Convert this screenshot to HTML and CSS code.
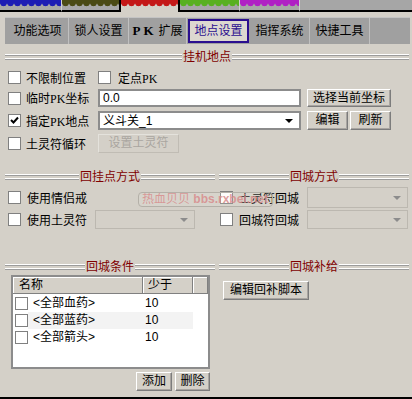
FILE: index.html
```html
<!DOCTYPE html>
<html>
<head>
    <title>地点设置</title>
    <link rel="stylesheet" href="styles.css">
</head>
<body>
    <!-- Colour tabs along the top edge -->
    <div class="strip">
        <div class="ft blue"></div>
        <div class="ft olive"></div>
        <div class="ft red"></div>
        <div class="ft green"></div>
        <div class="ft purple"></div>
        <div class="ft rest"></div>
    </div>

    <!-- Page tabs -->
    <div class="tabs">
        <div class="tab t1">功能选项</div>
        <div class="tab t2">锁人设置</div>
        <div class="tab t3"><span class="pk-bold">PK</span>扩展</div>
        <div class="tab sel">地点设置</div>
        <div class="tab t5">指挥系统</div>
        <div class="tab t6">快捷工具</div>
    </div>

    <div class="page">
        <!-- 挂机地点 -->
        <div class="sechead"><span class="line"></span><span class="title">挂机地点</span><span class="line"></span></div>
        <div class="s1">
            <div class="row r1">
                <div class="opt w90"><span class="cb"></span>不限制位置</div>
                <div class="opt wide"><span class="cb"></span><span>定点<span class="pk">PK</span></span></div>
            </div>
            <div class="row r2">
                <div class="opt w90"><span class="cb"></span><span>临时<span class="pk">PK</span>坐标</span></div>
                <div class="field">0.0</div>
                <div class="btn b-pick">选择当前坐标</div>
            </div>
            <div class="row r3">
                <div class="opt w90">
                    <span class="cb"><svg width="11" height="11" viewBox="0 0 11 11"><polyline points="2,5 4.5,7.5 9,2.5" fill="none" stroke="#000" stroke-width="2"/></svg></span>
                    <span>指定<span class="pk">PK</span>地点</span>
                </div>
                <div class="field combo"><span>义斗关_1</span><span class="arrow"></span></div>
                <div class="btn b-small">编辑</div>
                <div class="btn b-small">刷新</div>
            </div>
            <div class="row r4">
                <div class="opt w90"><span class="cb"></span>土灵符循环</div>
                <div class="btn dis b-set">设置土灵符</div>
            </div>
        </div>

        <!-- 回挂点方式 / 回城方式 -->
        <div class="cols sec2">
            <div class="col">
                <div class="sechead"><span class="line"></span><span class="title">回挂点方式</span><span class="line"></span></div>
                <div class="row ra left">
                    <div class="opt g6"><span class="cb"></span>使用情侣戒</div>
                </div>
                <div class="row rb left">
                    <div class="opt g6 w87"><span class="cb"></span>使用土灵符</div>
                    <div class="dcombo w100"><span class="arrow grey"></span></div>
                </div>
            </div>
            <div class="col">
                <div class="sechead"><span class="line"></span><span class="title">回城方式</span><span class="line"></span></div>
                <div class="row ra right">
                    <div class="opt g6 w87"><span class="cb"></span>土灵符回城</div>
                    <div class="dcombo w101 tall"><span class="arrow grey"></span></div>
                </div>
                <div class="row rb right">
                    <div class="opt g6 w87"><span class="cb"></span>回城符回城</div>
                    <div class="dcombo w101"><span class="arrow grey"></span></div>
                </div>
            </div>
        </div>

        <!-- 回城条件 / 回城补给 -->
        <div class="cols sec3">
            <div class="col">
                <div class="sechead"><span class="line"></span><span class="title">回城条件</span><span class="line"></span></div>
                <div class="list">
                    <div class="lhead">
                        <div class="hc c-name">名称</div>
                        <div class="hc c-num">少于</div>
                        <div class="hc c-end"></div>
                    </div>
                    <div class="lrow first"><span class="cb"></span><div class="cell">&lt;全部血药&gt;<span class="num">10</span></div></div>
                    <div class="lrow"><span class="cb"></span><div class="cell hl">&lt;全部蓝药&gt;<span class="num">10</span></div></div>
                    <div class="lrow"><span class="cb"></span><div class="cell">&lt;全部箭头&gt;<span class="num">10</span></div></div>
                </div>
                <div class="lbtns">
                    <div class="btn b-add">添加</div>
                    <div class="btn b-del">删除</div>
                </div>
            </div>
            <div class="col">
                <div class="sechead"><span class="line"></span><span class="title">回城补给</span><span class="line"></span></div>
                <div class="btn b-script">编辑回补脚本</div>
            </div>
        </div>
    </div>

    <div class="base"></div>

    <!-- Forum watermark lying over the form -->
    <div class="watermark">热血贝贝 <b>bbs.rxbei.net</b></div>
</body>
</html>
```

FILE: styles.css
```css
/* Whole window */
body {
    margin: 0;
    width: 412px;
    height: 399px;
    display: flex;
    flex-direction: column;
    overflow: hidden;
    background-color: #d4d0c8;
    font-family: "Liberation Sans", "Noto Sans CJK SC", sans-serif;
    font-size: 12px;
    color: #000;
    position: relative;
}

/* Colour tabs at the top */
.strip {
    display: flex;
    height: 12px;
    flex: none;
}

.ft {
    box-sizing: border-box;
    height: 12px;
    background-color: #a6a6a6;
    border-bottom: 2px solid #000;
    background-image:
        radial-gradient(circle at 3.5px 3px, var(--c) 3px, transparent 3.6px),
        linear-gradient(var(--c), var(--c));
    background-size: 7px 7px, 100% 3px;
    background-repeat: repeat-x, no-repeat;
}

.blue { --c: #1c1cb4; width: 62px; border-right: 1px solid #d0d0d0; }
.olive { --c: #4a4a14; width: 59px; border-right: 2px solid #000; }
.red { --c: #c41818; width: 57px; border-bottom: none; background-color: #d4d0c8; }
.green { --c: #58b020; width: 62px; border-left: 2px solid #000; border-right: 1px solid #d0d0d0; }
.purple { --c: #b020c4; width: 60px; border-right: 1px solid #d0d0d0; }
.rest { --c: transparent; flex: 1; }

/* Page tab bar */
.tabs {
    display: flex;
    flex: none;
    box-sizing: border-box;
    height: 27px;
    margin: 5px 2px 0 5px;
    padding-left: 2px;
    background-color: #a0a0a0;
    border-top: 1px solid #c4c4c4;
}

.tab {
    box-sizing: border-box;
    height: 26px;
    line-height: 26px;
    text-align: center;
    border-right: 1px solid #c0c0c0;
}

.t1 { width: 62px; }
.t2 { width: 60px; }
.t3 { width: 58px; }
.t5 { width: 60px; }
.t6 { width: 60px; }

.tab.sel {
    width: 61px;
    height: 24px;
    margin: 1px 1px 0 1px;
    line-height: 20px;
    border: 2px solid #2b0f8f;
    background-color: #dcd8d0;
    color: #2b0f8f;
}

.pk-bold {
    font-family: "Liberation Serif", serif;
    font-weight: bold;
    font-size: 13px;
    letter-spacing: 3px;
    margin-right: 2px;
}

.pk {
    font-family: "Liberation Serif", serif;
    font-size: 12px;
}

/* Main area */
.page {
    flex: 1;
    padding: 0 3px 0 5px;
}

.sechead {
    display: flex;
    align-items: center;
    height: 14px;
    margin-top: 6px;
}

.sechead .line {
    flex: 1;
    height: 6px;
    background: linear-gradient(to bottom,
        #fff 0 1px, #9c9c9c 1px 2px, transparent 2px 4px,
        #fff 4px 5px, #9c9c9c 5px 6px);
}

.sechead .title {
    color: #800000;
    padding: 0 1px;
    line-height: 14px;
}

.row {
    display: flex;
    align-items: center;
}

.s1 { padding-left: 3px; }
.r1 { margin-top: 6px; height: 15px; }
.r2 { margin-top: 4px; height: 18px; }
.r3 { margin-top: 4px; height: 19px; }
.r4 { margin-top: 4px; height: 19px; }

.opt {
    display: flex;
    align-items: center;
    gap: 5px;
    white-space: nowrap;
}

.opt.wide { gap: 7px; }
.opt.g6 { gap: 6px; }
.w90 { width: 90px; flex: none; }
.w87 { width: 87px; flex: none; }

/* Checkbox */
.cb {
    box-sizing: border-box;
    width: 13px;
    height: 13px;
    flex: none;
    border: 1px solid #808080;
    background-color: #fff;
    display: flex;
}

/* Edit box and combo */
.field {
    box-sizing: border-box;
    width: 203px;
    height: 18px;
    border: 2px solid #8c8c8c;
    background-color: #fff;
    padding-left: 3px;
    line-height: 14px;
    margin-right: 6px;
}

.field.combo {
    height: 19px;
    display: flex;
    align-items: center;
    justify-content: space-between;
}

.arrow {
    width: 0;
    height: 0;
    border-left: 4px solid transparent;
    border-right: 4px solid transparent;
    border-top: 4px solid #000;
    margin-right: 6px;
}

.arrow.grey { border-top-color: #8c8c8c; }

.dcombo {
    box-sizing: border-box;
    height: 19px;
    border: 1px solid #bcb8b0;
    display: flex;
    align-items: center;
    justify-content: flex-end;
}

.dcombo.tall { height: 21px; }
.w100 { width: 100px; }
.w101 { width: 101px; }

/* Buttons */
.btn {
    box-sizing: border-box;
    height: 19px;
    line-height: 16px;
    text-align: center;
    background-color: #d4d0c8;
    border: 1px solid;
    border-color: #fff #7c7c7c #7c7c7c #fff;
    box-shadow: inset -1px -1px #a8a4a0;
    white-space: nowrap;
}

.b-pick { width: 84px; height: 18px; }
.b-small { width: 41px; margin-right: 2px; }
.b-set { width: 81px; }

.btn.dis {
    color: #aaa6a0;
    border-color: #e4e2dc #c0bcb4 #c0bcb4 #e4e2dc;
    box-shadow: none;
}

/* Two column sections */
.cols {
    display: grid;
    grid-template-columns: 210px 190px;
    column-gap: 4px;
}

.sec2 { margin-top: 11px; }
.sec3 { margin-top: 25px; }

.ra { margin-top: 3px; height: 21px; }
.rb { margin-top: 2px; height: 19px; }
.left { padding-left: 3px; }
.right { padding-left: 1px; }

/* List of return conditions */
.list {
    box-sizing: border-box;
    width: 199px;
    height: 94px;
    margin: 1px 0 0 6px;
    border: 2px solid #8c8c8c;
    background-color: #fff;
}

.lhead {
    display: flex;
    height: 17px;
    background-color: #d4d0c8;
    border-bottom: 1px solid #808080;
    box-sizing: border-box;
}

.hc {
    box-sizing: border-box;
    height: 16px;
    line-height: 16px;
    border-right: 1px solid #808080;
    box-shadow: inset 1px 1px #fff;
}

.c-name { width: 130px; padding-left: 6px; }
.c-num { width: 50px; padding-left: 5px; }
.c-end { width: 15px; }

.lrow {
    display: flex;
    align-items: center;
    height: 17px;
}

.lrow.first { margin-top: 1px; }
.lrow .cb { margin-left: 2px; }

.cell {
    width: 165px;
    height: 17px;
    line-height: 17px;
    padding-left: 5px;
    box-sizing: border-box;
    display: flex;
}

.cell.hl { background-color: #f3f3f3; }

.num {
    margin-left: auto;
    width: 48px;
}

.lbtns {
    display: flex;
    justify-content: flex-end;
    gap: 3px;
    width: 199px;
    margin: 3px 0 0 6px;
}

.b-add { width: 36px; }
.b-del { width: 35px; }

.b-script {
    width: 86px;
    margin: 7px 0 0 4px;
}

.base {
    height: 2px;
    flex: none;
    background-color: #000;
}

/* Watermark over the form */
.watermark {
    position: absolute;
    left: 138px;
    top: 192px;
    box-sizing: border-box;
    width: 135px;
    height: 15px;
    padding-left: 3px;
    line-height: 13px;
    border: 1px solid #b4b0a8;
    border-radius: 4px;
    background-color: rgba(236, 232, 226, 0.15);
    color: rgba(216, 140, 140, 0.85);
    white-space: nowrap;
    overflow: hidden;
}
```
